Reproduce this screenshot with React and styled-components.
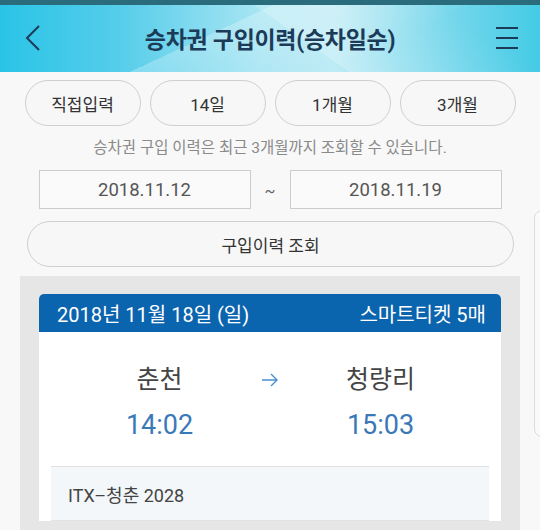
import styled, { createGlobalStyle } from "styled-components";

const GlobalStyle = createGlobalStyle`
  html, body {
    margin: 0;
    padding: 0;
    background: #f8f8f8;
    font-family: Roboto, "Noto Sans CJK KR", sans-serif;
    overflow: hidden;
  }
  * { box-sizing: border-box; }
`;

const Page = styled.div`
  position: relative;
  width: 540px;
  height: 530px;
  overflow: hidden;
  background: #f8f8f8;
`;

const Header = styled.header`
  height: 72px;
  border-top: 5px solid #2a6c7c;
  display: flex;
  align-items: center;
  justify-content: space-between;
  padding: 0 18px 2px 18px;
  background:
    linear-gradient(155deg, rgba(255,255,255,0) 40%, rgba(255,255,255,0.25) 40%, rgba(255,255,255,0) 70%),
    linear-gradient(35deg, rgba(255,255,255,0) 55%, rgba(255,255,255,0.2) 55%, rgba(255,255,255,0) 85%),
    linear-gradient(90deg, #2ac4e7 0%, #55cdea 22%, #a7e5f3 48%, #bdebf5 62%, #7ad8ec 82%, #44cbe5 100%);
`;

const IconButton = styled.button`
  width: 30px;
  height: 30px;
  padding: 0;
  border: none;
  background: transparent;
  display: flex;
  align-items: center;
  justify-content: center;
`;

const Title = styled.h1`
  margin: 0;
  font-size: 23px;
  font-weight: 700;
  color: #1c3b58;
  letter-spacing: -0.3px;
`;

const Content = styled.main`
  display: flex;
  flex-direction: column;
  align-items: center;
  padding-top: 8px;
`;

const PeriodRow = styled.div`
  display: grid;
  grid-template-columns: repeat(4, 116px);
  gap: 9px;
`;

const Pill = styled.button`
  height: ${(p) => p.$h || 46}px;
  width: ${(p) => (p.$wide ? "487px" : "100%")};
  border: 1px solid #cfcfcf;
  border-radius: 23px;
  background: #f7f7f7;
  color: #333;
  font-family: Roboto, "Noto Sans CJK KR", sans-serif;
  font-size: 17px;
  padding: 0;
`;

const Note = styled.p`
  margin: 9px 0 0 0;
  font-size: 15.5px;
  color: #8a8a8a;
`;

const DateRow = styled.div`
  display: flex;
  align-items: center;
  margin-top: 13px;
`;

const DateBox = styled.div`
  width: 212px;
  height: 39px;
  border: 1px solid #cccccc;
  background: #fafafa;
  display: flex;
  align-items: center;
  justify-content: center;
  font-size: 18.5px;
  color: #555;
`;

const Tilde = styled.span`
  width: 39px;
  text-align: center;
  color: #666;
  font-size: 16px;
  padding-top: 3px;
`;

const QueryWrap = styled.div`
  margin-top: 12px;
  padding-left: 1px;
`;

const Panel = styled.section`
  width: 500px;
  margin-top: 9px;
  background: #e6e6e6;
  padding: 18px 19px 0 19px;
  height: 260px;
`;

const Card = styled.article`
  background: #fff;
  border-radius: 5px 5px 0 0;
  overflow: hidden;
`;

const CardHead = styled.div`
  height: 38px;
  background: #0b64ae;
  color: #fff;
  display: flex;
  align-items: center;
  justify-content: space-between;
  padding: 0 15px 0 18px;
  font-size: 20px;
`;

const Route = styled.div`
  display: grid;
  grid-template-columns: 1fr 40px 1fr;
  padding: 32px 30px 24px 30px;
  align-items: start;
`;

const Stop = styled.div`
  display: flex;
  flex-direction: column;
  align-items: center;
  gap: 12px;
`;

const Station = styled.div`
  font-size: 25px;
  color: #454545;
  line-height: 32px;
`;

const Time = styled.div`
  font-size: 27px;
  color: #3a79b8;
  line-height: 34px;
`;

const Arrow = styled.div`
  display: flex;
  justify-content: center;
  padding-top: 9px;
`;

const TrainRow = styled.div`
  margin: 0 12px;
  height: 55px;
  background: #f3f7fa;
  border-top: 1px solid #e2e2e2;
  border-bottom: 1px solid #e2e2e2;
  display: flex;
  align-items: center;
  padding-left: 17px;
  font-size: 18px;
  color: #444;
`;

const SideTab = styled.div`
  position: absolute;
  left: 534px;
  top: 210px;
  width: 30px;
  height: 227px;
  border: 1px solid #dcdcdc;
  border-radius: 8px;
  background: #fafafa;
`;

export default function App() {
  return (
    <Page>
      <GlobalStyle />
      <Header>
        <IconButton aria-label="back">
          <svg width="16" height="26" viewBox="0 0 16 26">
            <path d="M14 1 L2 13 L14 25" fill="none" stroke="#1c3b58" strokeWidth="2" />
          </svg>
        </IconButton>
        <Title>승차권 구입이력(승차일순)</Title>
        <IconButton aria-label="menu">
          <svg width="22" height="22" viewBox="0 0 22 22">
            <path d="M0 1 H22 M0 11 H22 M0 21 H22" stroke="#1c3b58" strokeWidth="1.8" />
          </svg>
        </IconButton>
      </Header>
      <Content>
        <PeriodRow>
          <Pill>직접입력</Pill>
          <Pill>14일</Pill>
          <Pill>1개월</Pill>
          <Pill>3개월</Pill>
        </PeriodRow>
        <Note>승차권 구입 이력은 최근 3개월까지 조회할 수 있습니다.</Note>
        <DateRow>
          <DateBox>2018.11.12</DateBox>
          <Tilde>~</Tilde>
          <DateBox>2018.11.19</DateBox>
        </DateRow>
        <QueryWrap>
          <Pill $wide $h={46}>구입이력 조회</Pill>
        </QueryWrap>
        <Panel>
          <Card>
            <CardHead>
              <span>2018년 11월 18일 (일)</span>
              <span>스마트티켓 5매</span>
            </CardHead>
            <Route>
              <Stop>
                <Station>춘천</Station>
                <Time>14:02</Time>
              </Stop>
              <Arrow>
                <svg width="18" height="14" viewBox="0 0 18 14">
                  <path d="M1 7 H16 M10 1 L16 7 L10 13" fill="none" stroke="#4a90cf" strokeWidth="1.4" />
                </svg>
              </Arrow>
              <Stop>
                <Station>청량리</Station>
                <Time>15:03</Time>
              </Stop>
            </Route>
            <TrainRow>ITX–청춘 2028</TrainRow>
          </Card>
        </Panel>
      </Content>
      <SideTab />
    </Page>
  );
}
